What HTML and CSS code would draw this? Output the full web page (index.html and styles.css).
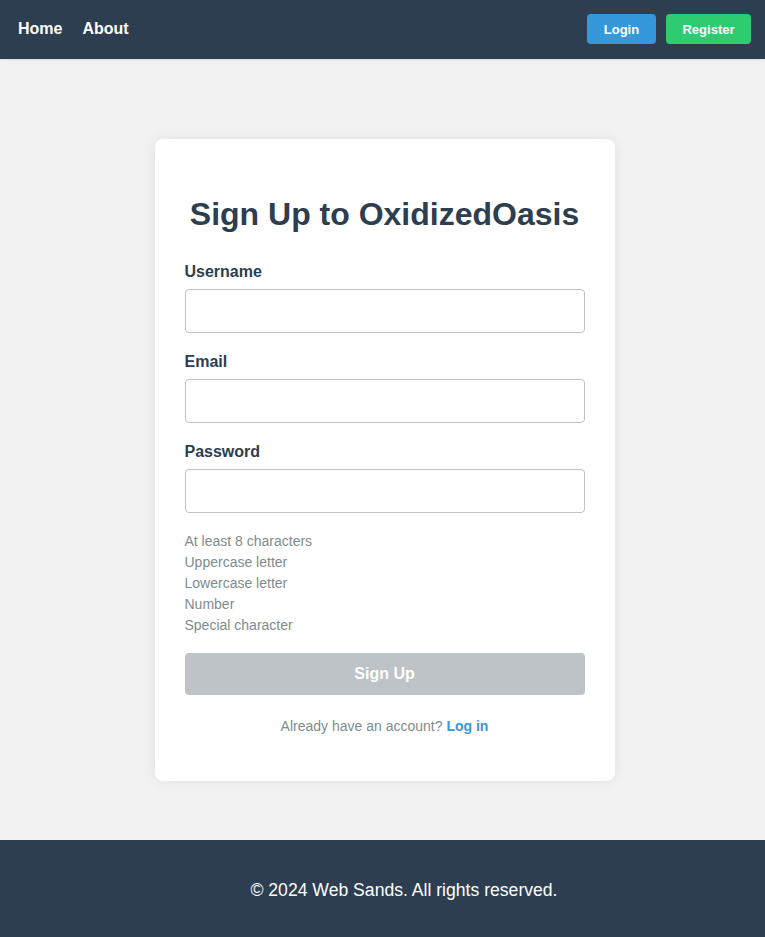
FILE: index.html
```html
<!DOCTYPE html>
<html lang="en">
<head>
<meta charset="utf-8">
<title>Sign Up - OxidizedOasis</title>
<link rel="stylesheet" href="styles.css">
</head>
<body>
<header class="navbar">
  <nav class="nav-links">
    <a href="#" class="nav-link">Home</a>
    <a href="#" class="nav-link">About</a>
  </nav>
  <div class="nav-actions">
    <a href="#" class="btn btn-login">Login</a>
    <a href="#" class="btn btn-register">Register</a>
  </div>
</header>
<main class="main">
  <section class="card">
    <h1 class="title">Sign Up to OxidizedOasis</h1>
    <form class="form">
      <div class="field">
        <label class="label" for="username">Username</label>
        <input class="input" id="username" type="text">
      </div>
      <div class="field">
        <label class="label" for="email">Email</label>
        <input class="input" id="email" type="email">
      </div>
      <div class="field field-last">
        <label class="label" for="password">Password</label>
        <input class="input" id="password" type="password">
      </div>
      <ul class="hints">
        <li>At least 8 characters</li>
        <li>Uppercase letter</li>
        <li>Lowercase letter</li>
        <li>Number</li>
        <li>Special character</li>
      </ul>
      <button type="button" class="submit" disabled>Sign Up</button>
    </form>
    <p class="switch">Already have an account? <a href="#" class="switch-link">Log in</a></p>
  </section>
</main>
<footer class="footer">
  <p class="footer-text">© 2024 Web Sands. All rights reserved.</p>
</footer>
</body>
</html>
```
FILE: styles.css
```css
* { box-sizing: border-box; }
html, body { margin: 0; padding: 0; }
body {
  font-family: "Liberation Sans", Arial, sans-serif;
  background: #f2f2f2;
  color: #2c3e50;
}
.navbar {
  height: 59px;
  background: #2c3e50;
  display: flex;
  align-items: center;
  justify-content: space-between;
  padding: 0 14px 1px 18px;
  box-shadow: 0 1px 2px rgba(0,0,0,0.1);
}
.nav-links { display: flex; gap: 20px; margin-top: -1px; }
.nav-link {
  color: #ffffff;
  text-decoration: none;
  font-weight: bold;
  font-size: 16px;
}
.nav-actions { display: flex; gap: 10px; margin-top: 0; }
.btn {
  display: flex;
  align-items: center;
  justify-content: center;
  height: 30px;
  border-radius: 4px;
  color: #fff;
  font-weight: bold;
  font-size: 13px;
  text-decoration: none;
}
.btn-login { background: #3498db; width: 69px; }
.btn-register { background: #2ecc71; width: 85px; }
.main {
  padding: 80px 0 59px 4px;
  display: flex;
  justify-content: center;
}
.card {
  width: 460px;
  background: #fff;
  border-radius: 8px;
  box-shadow: 0 0 12px rgba(0,0,0,0.08);
  padding: 57px 30px 47px;
}
.title {
  margin: 0 0 30px;
  text-align: center;
  font-size: 32px;
  line-height: 37px;
  font-weight: bold;
  color: #2c3e50;
}
.form { margin: 0; }
.field { display: flex; flex-direction: column; margin-bottom: 20px; }
.field-last { margin-bottom: 18px; }
.label {
  font-weight: bold;
  font-size: 16px;
  line-height: 18px;
  margin-bottom: 8px;
  color: #2c3e50;
}
.input {
  height: 44px;
  width: 100%;
  border: 1px solid #bdc3c7;
  border-radius: 4px;
  font-size: 16px;
  padding: 10px;
  font-family: inherit;
}
.hints {
  list-style: none;
  margin: 0 0 17px;
  padding: 0;
  font-size: 14px;
  line-height: 21px;
  color: #7f8c8d;
}
.submit {
  display: block;
  width: 100%;
  height: 42px;
  border: none;
  border-radius: 4px;
  background: #bdc3c7;
  color: #fff;
  font-family: inherit;
  font-size: 16px;
  font-weight: bold;
}
.switch {
  margin: 23px 0 0;
  text-align: center;
  font-size: 14px;
  line-height: 16px;
  color: #7f8c8d;
}
.switch-link { color: #3498db; font-weight: bold; text-decoration: none; }
.footer {
  background: #2c3e50;
  height: 97px;
  display: flex;
  align-items: center;
  justify-content: center;
  padding: 4px 0 0 43px;
}
.footer-text {
  margin: 0;
  color: #fff;
  font-size: 17.6px;
}
```
